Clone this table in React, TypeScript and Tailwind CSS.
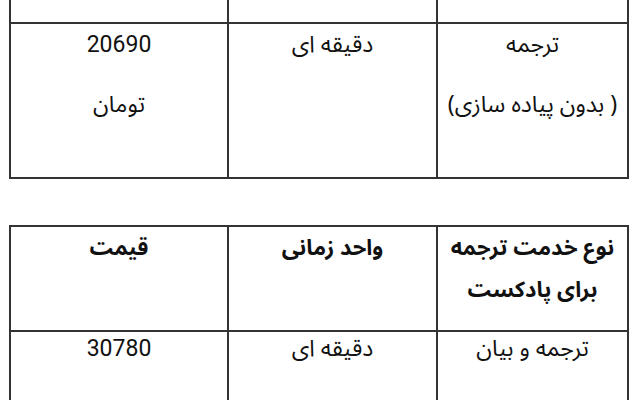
const fa = { fontFamily: '"Noto Sans Arabic", "DejaVu Sans", "Noto Sans", sans-serif' }

const Cell = ({ children, className = '' }: { children?: React.ReactNode; className?: string }) => (
  <div className={`flex flex-col items-center text-center ${className}`}>{children}</div>
)

export default function App() {
  return (
    <div className="h-[400px] w-[640px] overflow-hidden bg-white text-[#111]" style={fa}>
      <div className="-mt-[50px] flex flex-col px-[9px]">
        {/* first table, top row scrolled off */}
        <div dir="rtl" className="w-[620px] border-2 border-[#333]">
          <div className="grid h-[72px] grid-cols-[191px_209px_216px] border-b-2 border-[#333]">
            <Cell className="border-l-2 border-[#333]" />
            <Cell className="border-l-2 border-[#333]" />
            <Cell />
          </div>
          <div className="grid h-[153px] grid-cols-[191px_209px_216px]">
            <Cell className="gap-[28px] border-l-2 border-[#333] pt-[5px] text-[23px] leading-[32px]">
              <span>ترجمه</span>
              <span>( بدون پیاده سازی)</span>
            </Cell>
            <Cell className="border-l-2 border-[#333] pt-[5px] text-[23px] leading-[32px]">
              <span>دقیقه ای</span>
            </Cell>
            <Cell className="gap-[28px] pt-[5px] text-[23px] leading-[32px]">
              <span className="font-['Roboto'] text-[23px]">20690</span>
              <span>تومان</span>
            </Cell>
          </div>
        </div>

        <div className="h-[46px]" />

        {/* second table */}
        <div dir="rtl" className="w-[620px] border-2 border-[#333]">
          <div className="grid h-[105px] grid-cols-[191px_209px_216px] border-b-2 border-[#333] font-bold">
            <Cell className="border-l-2 border-[#333] text-[22px] leading-[42px]">
              <span>نوع خدمت ترجمه</span>
              <span>برای پادکست</span>
            </Cell>
            <Cell className="border-l-2 border-[#333] text-[22px] leading-[42px]">
              <span>واحد زمانی</span>
            </Cell>
            <Cell className="text-[22px] leading-[42px]">
              <span>قیمت</span>
            </Cell>
          </div>
          <div className="grid h-[120px] grid-cols-[191px_209px_216px]">
            <Cell className="border-l-2 border-[#333] pt-[1px] text-[23px] leading-[32px]">
              <span>ترجمه و بیان</span>
            </Cell>
            <Cell className="border-l-2 border-[#333] pt-[1px] text-[23px] leading-[32px]">
              <span>دقیقه ای</span>
            </Cell>
            <Cell className="pt-[1px] text-[23px] leading-[32px]">
              <span className="font-['Roboto']">30780</span>
            </Cell>
          </div>
        </div>
      </div>
    </div>
  )
}
